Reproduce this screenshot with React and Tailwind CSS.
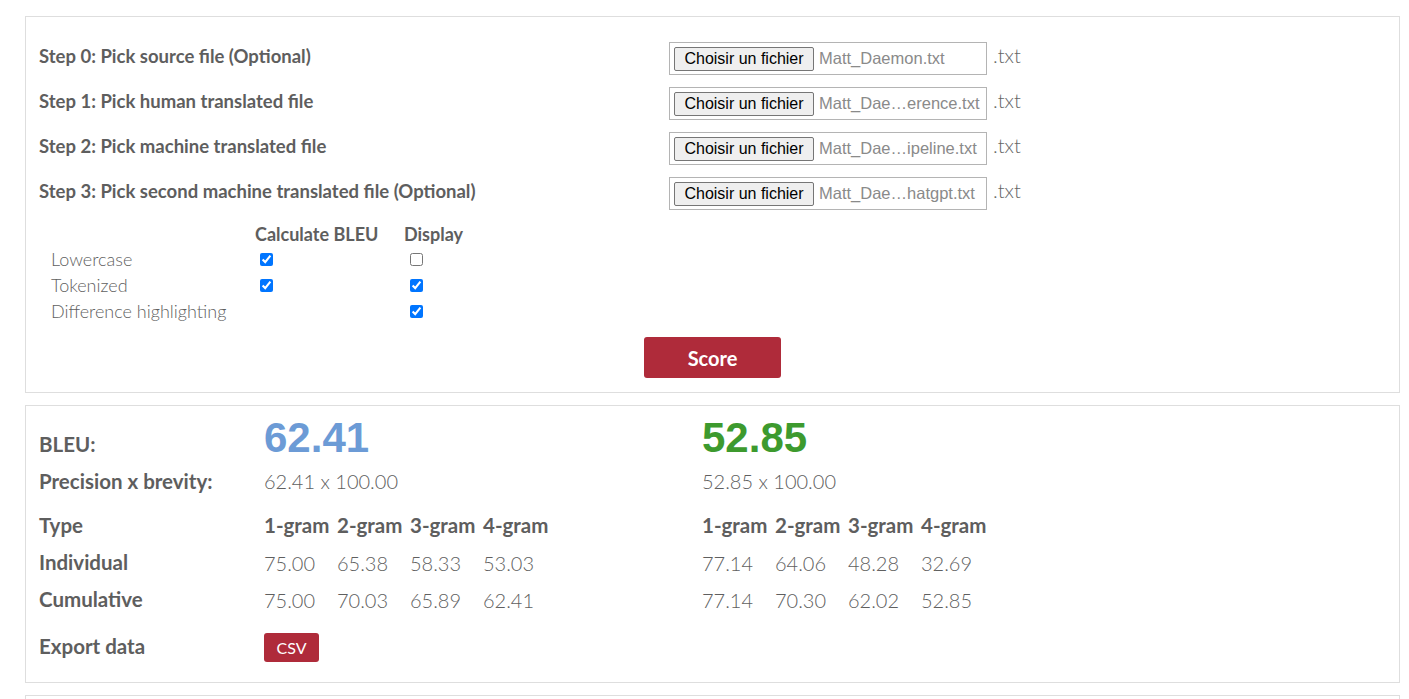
import React from "react";

const FONT = { fontFamily: "Lato, 'Open Sans', sans-serif" };
const ARIAL = { fontFamily: "'Liberation Sans', Arial, sans-serif" };

function FileInput({ name }) {
  return (
    <div className="flex items-center">
      <div className="flex items-center w-[318px] h-[33px] border border-[#b4b4b4] pl-[4px]">
        <div
          className="h-[24px] w-[140px] flex items-center justify-center border border-[#767676] rounded-[2px] bg-[#efefef] text-[16px] text-black"
          style={ARIAL}
        >
          Choisir un fichier
        </div>
        <span className="ml-[5px] text-[16.5px] text-[#8a8a8a]" style={ARIAL}>
          {name}
        </span>
      </div>
      <span className="ml-[6px] text-[20px] text-[#666666] font-light -mt-[7px]">.txt</span>
    </div>
  );
}

function StepRow({ label, file }) {
  return (
    <div className="flex items-center h-[45px]">
      <div className="w-[630px] text-[18.5px] font-bold text-[#5e5e5e] pb-[3px]">{label}</div>
      <FileInput name={file} />
    </div>
  );
}

function Check({ checked }) {
  return (
    <input
      type="checkbox"
      defaultChecked={checked}
      readOnly
      className="w-[13px] h-[13px] m-0 accent-[#0075ff]"
    />
  );
}

function NRow({ label, a, b, bold }) {
  const cell = bold
    ? "w-[73px] text-[20.5px] font-bold text-[#5e5e5e] whitespace-nowrap"
    : "w-[73px] text-[20px] font-light text-[#5f5f5f]";
  return (
    <div className="flex items-center h-[37px]">
      <div className="w-[225px] text-[20.5px] font-bold text-[#5e5e5e]">{label}</div>
      <div className="w-[438px] flex">
        {a.map((v, i) => (
          <div key={i} className={cell}>{v}</div>
        ))}
      </div>
      <div className="flex">
        {b.map((v, i) => (
          <div key={i} className={cell}>{v}</div>
        ))}
      </div>
    </div>
  );
}

export default function App() {
  return (
    <div className="bg-white h-[699px] overflow-hidden pt-[16px] pl-[25px] pr-[9px]" style={FONT}>
      {/* Panel 1 */}
      <div className="border border-[#dedede] pt-[19px] pl-[13px] pb-[14px]">
        <StepRow label="Step 0: Pick source file (Optional)" file="Matt_Daemon.txt" />
        <StepRow label="Step 1: Pick human translated file" file="Matt_Dae…erence.txt" />
        <StepRow label="Step 2: Pick machine translated file" file="Matt_Dae…ipeline.txt" />
        <StepRow label="Step 3: Pick second machine translated file (Optional)" file="Matt_Dae…hatgpt.txt" />

        <div className="mt-[6px] pl-[12px] grid grid-cols-[204px_149px_1fr] text-[#5f5f5f]">
          <div className="h-[24px]" />
          <div className="h-[24px] flex items-center text-[18px] font-bold text-[#5e5e5e] whitespace-nowrap">Calculate BLEU</div>
          <div className="h-[24px] flex items-center text-[18px] font-bold text-[#5e5e5e]">Display</div>

          <div className="h-[26px] flex items-center text-[18px] font-light">Lowercase</div>
          <div className="h-[26px] flex items-center pl-[5px]"><Check checked /></div>
          <div className="h-[26px] flex items-center pl-[6px]"><Check checked={false} /></div>

          <div className="h-[26px] flex items-center text-[18px] font-light">Tokenized</div>
          <div className="h-[26px] flex items-center pl-[5px]"><Check checked /></div>
          <div className="h-[26px] flex items-center pl-[6px]"><Check checked /></div>

          <div className="h-[26px] flex items-center text-[18px] font-light whitespace-nowrap">Difference highlighting</div>
          <div className="h-[26px]" />
          <div className="h-[26px] flex items-center pl-[6px]"><Check checked /></div>
        </div>

        <div className="flex justify-center mt-[13px] pr-[13px]">
          <button className="w-[137px] h-[41px] rounded-[3px] bg-[#af2b3a] text-white text-[20px] font-bold">
            Score
          </button>
        </div>
      </div>

      {/* Panel 2 */}
      <div className="mt-[12px] border border-[#dedede] pt-[8px] pl-[13px] pb-[16px]">
        <div className="flex items-baseline h-[48px]">
          <div className="w-[225px] text-[20.5px] font-bold text-[#5e5e5e]">BLEU:</div>
          <div className="w-[438px] text-[42px] leading-[48px] font-bold text-[#6c9bd6]" style={ARIAL}>62.41</div>
          <div className="text-[42px] leading-[48px] font-bold text-[#3d9a2e]" style={ARIAL}>52.85</div>
        </div>
        <div className="flex items-center h-[40px] -mt-[1px]">
          <div className="w-[225px] text-[20.5px] font-bold text-[#5e5e5e]">Precision x brevity:</div>
          <div className="w-[438px] text-[20px] font-light text-[#5f5f5f]">62.41 x 100.00</div>
          <div className="text-[20px] font-light text-[#5f5f5f]">52.85 x 100.00</div>
        </div>
        <div className="mt-[6px]">
          <NRow label="Type" bold a={["1-gram", "2-gram", "3-gram", "4-gram"]} b={["1-gram", "2-gram", "3-gram", "4-gram"]} />
          <NRow label="Individual" a={["75.00", "65.38", "58.33", "53.03"]} b={["77.14", "64.06", "48.28", "32.69"]} />
          <NRow label="Cumulative" a={["75.00", "70.03", "65.89", "62.41"]} b={["77.14", "70.30", "62.02", "52.85"]} />
        </div>
        <div className="flex items-center h-[39px] mt-[9px]">
          <div className="w-[225px] text-[20.5px] font-bold text-[#5e5e5e]">Export data</div>
          <button className="w-[55px] h-[29px] rounded-[3px] bg-[#af2b3a] text-white text-[16px] mt-[2px]">CSV</button>
        </div>
      </div>

      {/* Panel 3 */}
      <div className="mt-[12px] border border-[#dedede] h-[40px]" />
    </div>
  );
}
